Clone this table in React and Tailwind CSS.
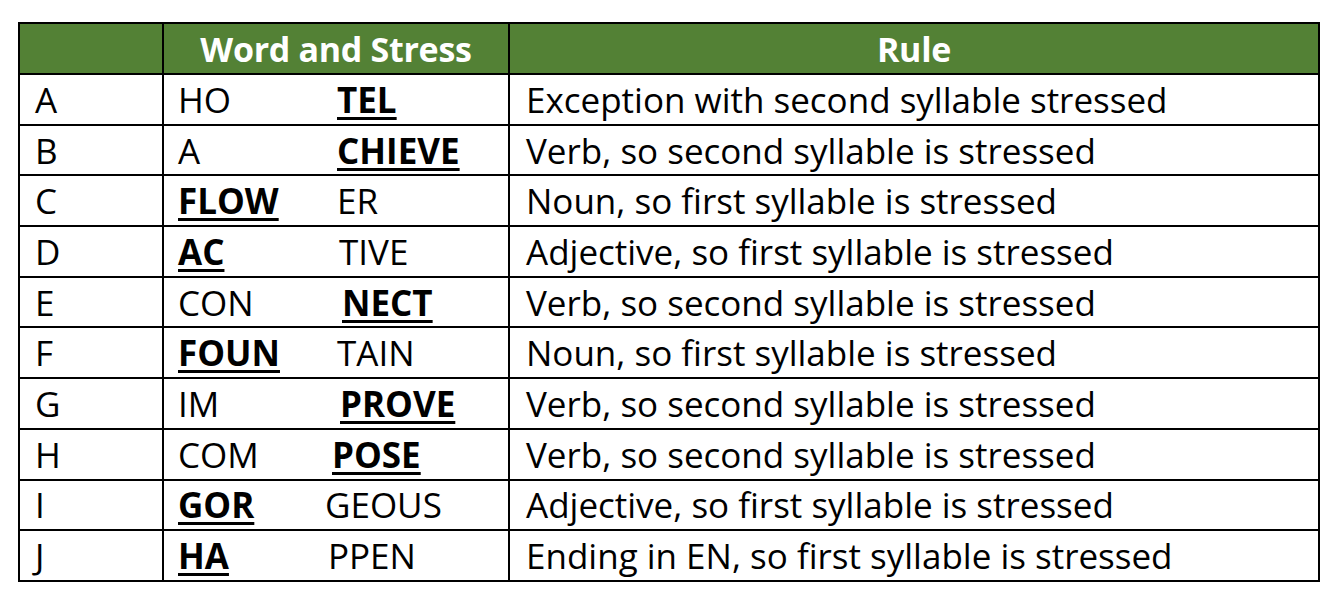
import React from 'react';

const rows = [
  { id: 'A', first: 'HO', second: 'TEL', stress: 2, gap: 'w-[159px]', rule: 'Exception with second syllable stressed' },
  { id: 'B', first: 'A', second: 'CHIEVE', stress: 2, gap: 'w-[159px]', rule: 'Verb, so second syllable is stressed' },
  { id: 'C', first: 'FLOW', second: 'ER', stress: 1, gap: 'w-[159px]', rule: 'Noun, so first syllable is stressed' },
  { id: 'D', first: 'AC', second: 'TIVE', stress: 1, gap: 'w-[161px]', rule: 'Adjective, so first syllable is stressed' },
  { id: 'E', first: 'CON', second: 'NECT', stress: 2, gap: 'w-[164px]', rule: 'Verb, so second syllable is stressed' },
  { id: 'F', first: 'FOUN', second: 'TAIN', stress: 1, gap: 'w-[159px]', rule: 'Noun, so first syllable is stressed' },
  { id: 'G', first: 'IM', second: 'PROVE', stress: 2, gap: 'w-[162px]', rule: 'Verb, so second syllable is stressed' },
  { id: 'H', first: 'COM', second: 'POSE', stress: 2, gap: 'w-[154px]', rule: 'Verb, so second syllable is stressed' },
  { id: 'I', first: 'GOR', second: 'GEOUS', stress: 1, gap: 'w-[147px]', rule: 'Adjective, so first syllable is stressed' },
  { id: 'J', first: 'HA', second: 'PPEN', stress: 1, gap: 'w-[150px]', rule: 'Ending in EN, so first syllable is stressed' },
];

const Stressed = ({ children }) => (
  <span className="font-bold underline decoration-[3px] underline-offset-[4px]">{children}</span>
);

export default function App() {
  return (
    <div className="min-h-screen bg-white pt-[22px] pl-[18px] font-['Open_Sans','Liberation_Sans',sans-serif] text-black">
      <table className="w-[1302px] border-collapse border-2 border-black text-[35px] leading-none">
        <thead>
          <tr className="h-[51px] bg-[#538135] text-[34px] tracking-[-0.3px] text-white">
            <th className="w-[144px] border-2 border-black" />
            <th className="w-[346px] border-2 border-black font-bold">Word and Stress</th>
            <th className="border-2 border-black font-bold">Rule</th>
          </tr>
        </thead>
        <tbody>
          {rows.map((row) => (
            <tr key={row.id} className="h-[50.7px]">
              <td className="border-2 border-black pl-[15px]">{row.id}</td>
              <td className="border-2 border-black pl-[14px]">
                <div className="flex items-baseline">
                  <span className={row.gap}>
                    {row.stress === 1 ? <Stressed>{row.first}</Stressed> : row.first}
                  </span>
                  <span>
                    {row.stress === 2 ? <Stressed>{row.second}</Stressed> : row.second}
                  </span>
                </div>
              </td>
              <td className="border-2 border-black pl-[16px]">{row.rule}</td>
            </tr>
          ))}
        </tbody>
      </table>
    </div>
  );
}
